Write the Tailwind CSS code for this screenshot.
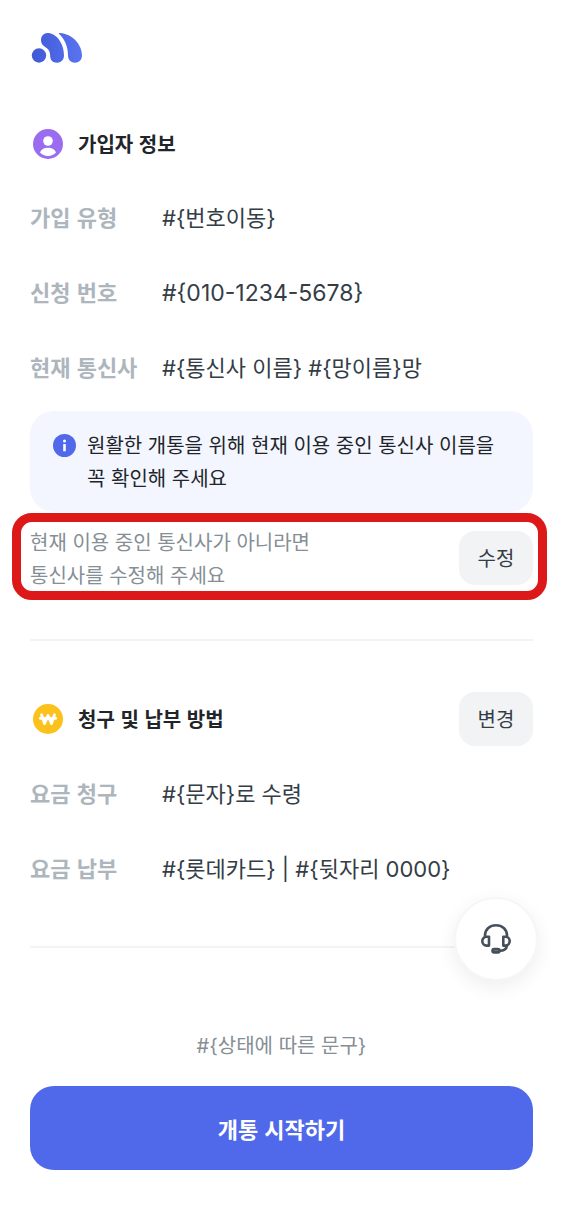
<!DOCTYPE html>
<html lang="ko">
<head>
<meta charset="utf-8">
<meta name="viewport" content="width=device-width, initial-scale=1">
<title>가입자 정보</title>
<script src="https://cdn.jsdelivr.net/npm/@tailwindcss/browser@4"></script>
</head>
<body class="min-h-screen bg-white font-['Noto_Sans_CJK_KR',sans-serif] text-[#212529]">
<div class="flex min-h-screen flex-col px-[30px] pb-12">
  <header class="pt-8">
    <a href="#" aria-label="홈" class="block w-[54px]">
      <svg width="54" height="32" viewBox="0 0 54 32">
        <defs><linearGradient id="g" gradientUnits="userSpaceOnUse" x1="0" y1="0" x2="54" y2="0"><stop offset="0" stop-color="#4059d4"/><stop offset="1" stop-color="#5a74f3"/></linearGradient></defs>
        <g fill="url(#g)">
          <circle cx="9" cy="23.500" r="7.200"/>
          <path d="M17.500 1 C26 1 34 11 34 23.500 C34 28 31 30.700 27 30.700 C22.500 30.700 20.300 28 20.200 24 C20 19 18.500 17 15.500 15.200 C12.500 13.400 11 11.300 11 8 C11 4 14 1 17.500 1Z"/>
          <path d="M29 1.800 C28.500 1.200 29.200 .9 30 1 C42 2 52 12 52 23.500 C52 28 49 30.700 45 30.700 C41 30.700 38 28 38 23.500 C38 14 34.500 7 29 1.800Z"/>
        </g>
      </svg>
    </a>
  </header>

  <main class="flex flex-col">
    <section class="pt-[60px]">
      <div class="flex h-10 items-center gap-[15px] pl-[3px]">
        <svg width="30" height="30" viewBox="0 0 30 30" aria-hidden="true">
          <circle cx="15" cy="15" r="15" fill="#9b6cf0"/>
          <circle cx="15" cy="12" r="4.800" fill="#fff"/>
          <path d="M7 23.500 C8 20.500 11 18.800 15 18.800 S22 20.500 23 23.500 C21 25.800 18.300 27 15 27 S9 25.800 7 23.500Z" fill="#fff"/>
        </svg>
        <h2 class="text-[20px] leading-8 font-bold">가입자 정보</h2>
      </div>
      <dl class="mt-[15px] text-[22px] leading-[75px]">
        <div class="flex h-[75px] items-baseline"><dt class="w-[132px] shrink-0 font-bold text-[#adb5bd]">가입 유형</dt><dd class="font-['Inter','Noto_Sans_CJK_KR',sans-serif] text-[#343d46]">#{번호이동}</dd></div>
        <div class="flex h-[75px] items-baseline"><dt class="w-[132px] shrink-0 font-bold text-[#adb5bd]">신청 번호</dt><dd class="font-['Inter','Noto_Sans_CJK_KR',sans-serif] text-[23px] text-[#343d46]">#{010-1234-5678}</dd></div>
        <div class="flex h-[75px] items-baseline"><dt class="w-[132px] shrink-0 font-bold text-[#adb5bd]">현재 통신사</dt><dd class="font-['Inter','Noto_Sans_CJK_KR',sans-serif] text-[#343d46]">#{통신사 이름} #{망이름}망</dd></div>
      </dl>
      <div class="mt-[7px] flex gap-[10px] rounded-3xl bg-[#f3f6ff] px-[23px] pt-[17px] pb-[18px]">
        <svg class="mt-[6px] shrink-0" width="24" height="24" viewBox="0 0 24 24" aria-hidden="true">
          <circle cx="11.500" cy="11.500" r="11.500" fill="#5069ea"/>
          <circle cx="11.500" cy="7" r="1.500" fill="#fff"/>
          <path d="M10.200 10h2.600V17.300h-2.600z" fill="#fff"/>
        </svg>
        <p class="text-[20px] leading-[33px]">원활한 개통을 위해 현재 이용 중인 통신사 이름을<br>꼭 확인해 주세요</p>
      </div>
      <div class="relative mt-[13px] flex items-center justify-between">
        <p class="text-[20px] leading-[33px] text-[#868e96]">현재 이용 중인 통신사가 아니라면<br>통신사를 수정해 주세요</p>
        <button type="button" class="h-[54px] w-[74px] rounded-2xl bg-[#f1f3f5] text-[20px] text-[#343d46]">수정</button>
        <div class="pointer-events-none absolute -top-3 -right-[14px] -bottom-[9px] -left-[18px] rounded-[20px] border-9 border-[#dd1818]"></div>
      </div>
    </section>

    <section class="mt-12 border-t-2 border-[#f1f3f5] pt-[51px]">
      <div class="flex items-center gap-[15px] pl-[3px]">
        <svg width="30" height="30" viewBox="0 0 30 30" aria-hidden="true">
          <circle cx="15" cy="15" r="15" fill="#fcc21b"/>
          <path d="M8.500 10.800 L11.500 19.600 L15 11.500 L18.500 19.600 L21.500 10.800 M7.300 14.300H22.700" fill="none" stroke="#fff" stroke-width="2.800" stroke-linecap="round" stroke-linejoin="round"/>
        </svg>
        <h2 class="flex-1 text-[20px] leading-8 font-bold">청구 및 납부 방법</h2>
        <button type="button" class="h-[54px] w-[74px] rounded-2xl bg-[#f1f3f5] text-[20px] text-[#343d46]">변경</button>
      </div>
      <dl class="mt-[9px] text-[22px] leading-[75px]">
        <div class="flex h-[75px] items-baseline"><dt class="w-[132px] shrink-0 font-bold text-[#adb5bd]">요금 청구</dt><dd class="font-['Inter','Noto_Sans_CJK_KR',sans-serif] text-[#343d46]">#{문자}로 수령</dd></div>
        <div class="flex h-[75px] items-baseline"><dt class="w-[132px] shrink-0 font-bold text-[#adb5bd]">요금 납부</dt><dd class="font-['Inter','Noto_Sans_CJK_KR',sans-serif] text-[#343d46]">#{롯데카드} | #{뒷자리 0000}</dd></div>
      </dl>
      <div class="relative mt-[41px] border-t-2 border-[#f1f3f5]">
        <button type="button" aria-label="상담" class="absolute -top-[51px] -right-[5px] flex size-[84px] items-center justify-center rounded-full border-2 border-[#f5f6f7] bg-white shadow-[0_6px_20px_rgba(0,0,0,0.07)]">
          <svg width="32" height="32" viewBox="0 0 32 32" fill="none" stroke="#454f5a" stroke-width="2.600" stroke-linejoin="round" aria-hidden="true">
            <path d="M5 14 V12.500 C5 6 10 2.300 16 2.300 S27 6 27 12.500 V14"/>
            <path d="M9 13.800 H6.500 C4 13.800 2.300 15.700 2.300 18 S4 22.600 6.500 22.600 H9Z"/>
            <path d="M23.300 13.800 H25.500 C28 13.800 29.700 15.700 29.700 18 S28 22.600 25.500 22.600 H23.300Z"/>
            <path d="M27 22.600 C26.500 26 24 27.800 19.500 27.800"/>
            <rect x="12.500" y="26" width="7" height="3.400" rx="1.700" fill="#7a828b"/>
          </svg>
        </button>
      </div>
    </section>
  </main>

  <footer class="mt-[82px] flex flex-col">
    <p class="text-center font-['Inter','Noto_Sans_CJK_KR',sans-serif] text-[20px] leading-8 text-[#868e96]">#{상태에 따른 문구}</p>
    <button type="button" class="mt-6 h-[84px] rounded-3xl bg-[#5069ea] text-[22px] font-bold text-white">개통 시작하기</button>
  </footer>
</div>
</body>
</html>
